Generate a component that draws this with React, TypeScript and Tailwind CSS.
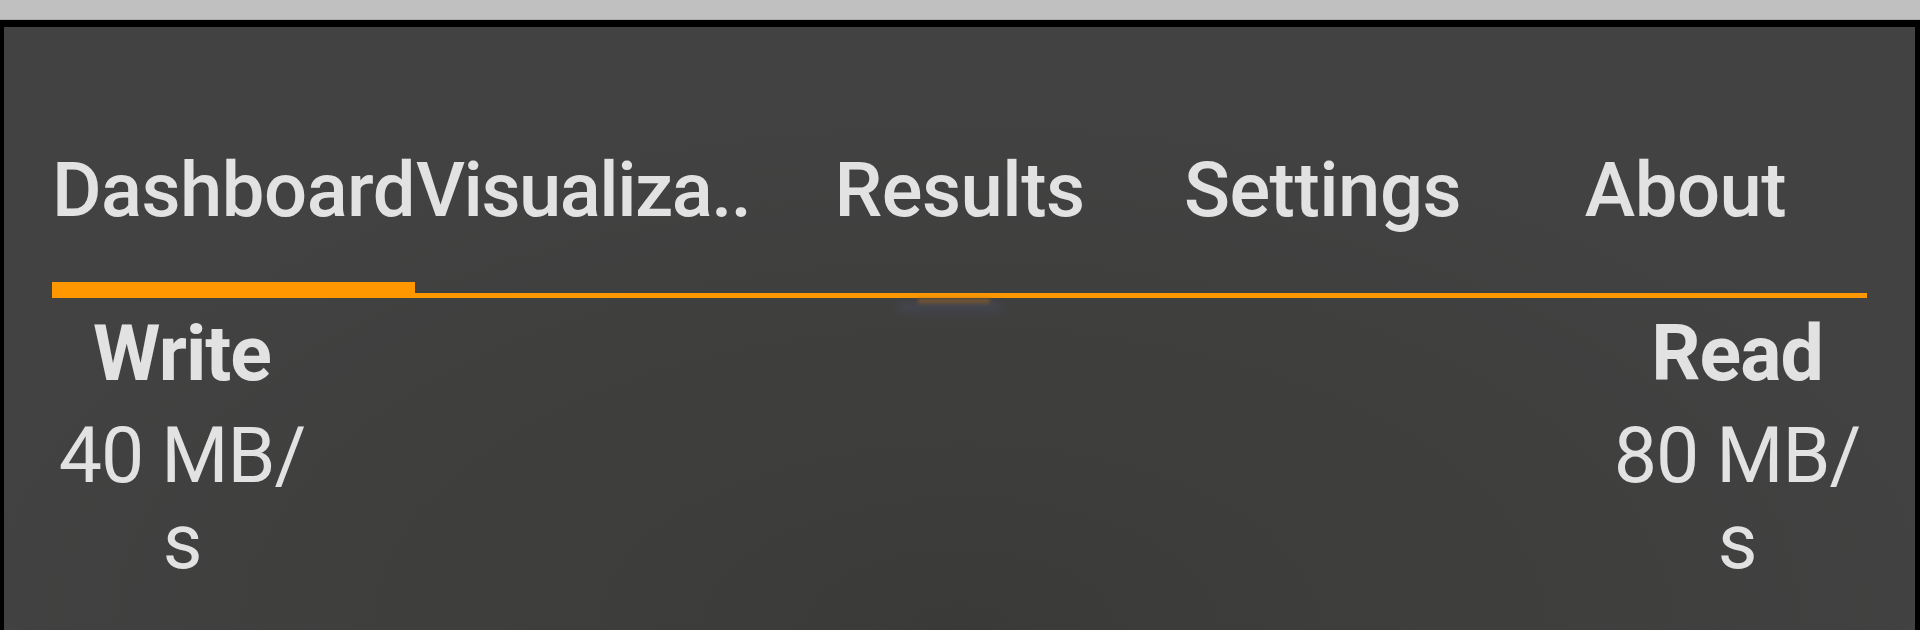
import React from "react";

const tabs = ["Dashboard", "Visualiza..", "Results", "Settings", "About"];

export default function App() {
  return (
    <div className="w-[1920px] h-[630px] overflow-hidden flex flex-col bg-[#c0c0c0] font-['Roboto',sans-serif]">
      <div className="h-[20px] shrink-0 border-b border-[#a8a8a8]" />
      <div className="flex-1 bg-black pt-[7px] pl-[4px] pr-[5px]">
        <div className="relative h-full bg-[#424242] bg-[radial-gradient(ellipse_55%_90%_at_50%_100%,#3a3a38_0%,#3e3e3d_45%,#424242_100%)] px-[48px] pt-[119px]">
          {/* Tabs */}
          <div className="grid grid-cols-5 h-[88px]">
            {tabs.map((t, i) => (
              <div
                key={t}
                className={
                  i === 1
                    ? "flex justify-start whitespace-nowrap text-[76px] leading-[88px] font-medium text-[#e2e2e2] tracking-[-1.5px]"
                    : "flex justify-center whitespace-nowrap text-[76px] leading-[88px] font-medium text-[#e2e2e2] tracking-[-0.5px]"
                }
              >
                <span className={i === 1 ? "pl-[1px]" : ""}>{t}</span>
              </div>
            ))}
          </div>
          {/* Indicator */}
          <div className="relative mt-[48px] h-[16px]">
            <div className="absolute left-0 right-0 bottom-0 h-[5px] bg-[#ff9800]" />
            <div className="absolute left-0 bottom-0 w-[363px] h-[16px] bg-[#ff9800]" />
          </div>
          {/* Glow artifact under the line */}
          <div className="absolute left-[914px] top-[272px] w-[72px] h-[4px] bg-[#a86a1c] opacity-70 blur-[2px]" />
          <div className="absolute left-[893px] top-[276px] w-[105px] h-[8px] bg-[#4b5272] opacity-40 blur-[4px]" />
          {/* Stats */}
          <div className="flex justify-between mt-[12px]">
            <div className="w-[260px] flex flex-col items-center text-[#e2e2e2] tracking-[-1px]">
              <div className="text-[77px] leading-[88px] font-bold">Write</div>
              <div className="mt-[15px] text-[77px] leading-[86px] font-normal text-center">
                40 MB/
                <br />s
              </div>
            </div>
            <div className="w-[260px] flex flex-col items-center text-[#e2e2e2] tracking-[-1px]">
              <div className="text-[77px] leading-[88px] font-bold">Read</div>
              <div className="mt-[15px] text-[77px] leading-[86px] font-normal text-center">
                80 MB/
                <br />s
              </div>
            </div>
          </div>
        </div>
      </div>
    </div>
  );
}
